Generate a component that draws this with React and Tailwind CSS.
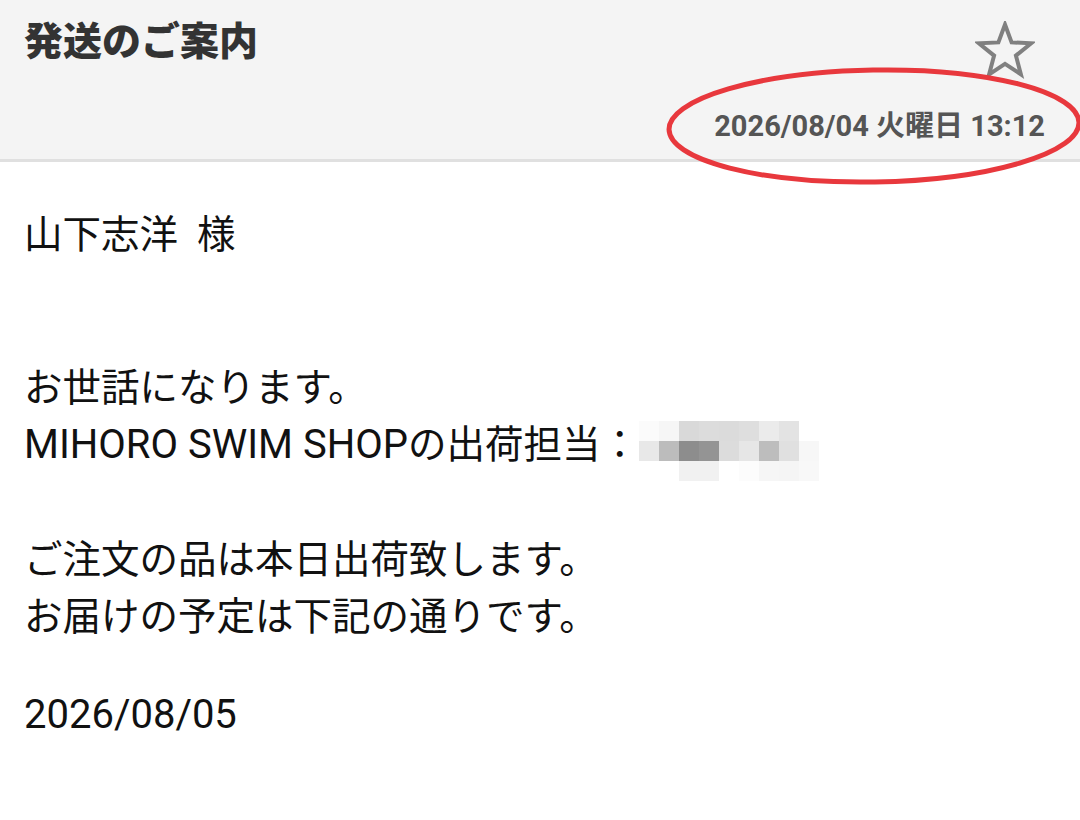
import React from "react";

const FONT = { fontFamily: 'Roboto, "Noto Sans CJK JP", sans-serif' };

const blurRows = [
  ["#fbfbfb", "#f6f6f6", "#d9d9d9", "#dcdcdc", "#dbdbdb", "#dedede", "#ebebeb", "#e3e3e3", "#ffffff"],
  ["#e8e8e8", "#bcbcbc", "#8d8d8d", "#949494", "#dcdcdc", "#e6e6e6", "#bdbdbd", "#e0e0e0", "#f7f7f7"],
  ["#ffffff", "#ffffff", "#f1f1f1", "#f1f1f1", "#ffffff", "#fcfcfc", "#f6f6f6", "#f5f5f5", "#f8f8f8"],
];

function Blur() {
  return (
    <span className="inline-grid grid-cols-[repeat(9,20px)] align-middle relative top-[3px]">
      {blurRows.flat().map((c, i) => (
        <span key={i} className="block w-[20px] h-[20px]" style={{ backgroundColor: c }} />
      ))}
    </span>
  );
}

export default function App() {
  return (
    <div className="relative w-[1080px] h-[820px] bg-white overflow-hidden" style={FONT}>
      <header className="h-[162px] bg-[#f4f4f4] border-b-[3px] border-[#e0e0e0] flex flex-col pt-[18px] pl-6 pr-[35px]">
        <div className="flex justify-between items-start h-[48px]">
          <h1 className="text-[39px] leading-[48px] font-black text-[#333333]">発送のご案内</h1>
          <svg width="60" height="60" viewBox="0 0 60 60" className="mt-[3px] mr-[10px]">
            <polygon
              points="30,3.5 36.6,21.4 56.2,22.3 40.9,34.6 45.9,53.4 30,42.8 14.1,53.4 19.1,34.6 3.8,22.3 23.4,21.4"
              fill="none"
              stroke="#808080"
              strokeWidth="4"
              strokeLinejoin="miter"
            />
          </svg>
        </div>
        <div className="mt-[40px] text-right text-[29px] leading-[40px] font-bold text-[#555555]">
          2026/08/04 火曜日 13:12
        </div>
      </header>

      <main className="pl-6 pt-[44px] text-[38.5px] leading-[57px] text-[#111111]">
        <p>山下志洋&nbsp;&nbsp;様</p>
        <p className="mt-[96px]">お世話になります。</p>
        <p className="whitespace-nowrap">
          <span className="text-[40px]">MIHORO SWIM SHOP</span>の出荷担当：<Blur />
        </p>
        <p className="mt-[53px]">ご注文の品は本日出荷致します。</p>
        <p>お届けの予定は下記の通りです。</p>
        <p className="mt-[41px] text-[40px]">2026/08/05</p>
      </main>

      <svg className="absolute left-0 top-0 pointer-events-none" width="1080" height="820" viewBox="0 0 1080 820">
        <ellipse cx="874" cy="126" rx="205" ry="56" fill="none" stroke="#e8383d" strokeWidth="5" transform="rotate(-1 874 126)" />
      </svg>
    </div>
  );
}
